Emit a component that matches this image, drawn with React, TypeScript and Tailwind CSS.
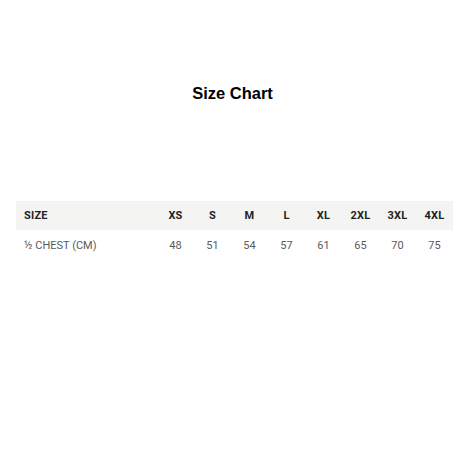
import React from 'react';

const sizes = ['XS', 'S', 'M', 'L', 'XL', '2XL', '3XL', '4XL'];
const chest = [48, 51, 54, 57, 61, 65, 70, 75];

const App: React.FC = () => {
    return (
        <div className="w-[465px] h-[465px] bg-white px-4">
            {/* Title */}
            <h1 className="pt-[82px] text-center text-[16.5px] leading-[22px] font-bold text-black font-['Liberation_Sans',Arial,sans-serif]">
                Size Chart
            </h1>

            {/* Table */}
            <table className="mt-[97px] w-[437px] table-fixed border-collapse font-['Roboto',sans-serif] text-[11px]">
                <colgroup>
                    <col className="w-[141px]" />
                    {sizes.map((s) => (
                        <col key={s} className="w-[37px]" />
                    ))}
                </colgroup>
                <thead>
                    <tr className="h-[29px] bg-[#f4f5f3]">
                        <th className="pl-2 pt-[2px] text-left font-bold text-[#1f1f1f] tracking-[0.2px]">SIZE</th>
                        {sizes.map((s) => (
                            <th key={s} className="pt-[2px] text-center font-bold text-[#1f1f1f] tracking-[0.2px]">{s}</th>
                        ))}
                    </tr>
                </thead>
                <tbody>
                    <tr className="h-[30px]">
                        <td className="pl-2 pt-[2px] text-left text-[#5a5a5a]">½ CHEST (CM)</td>
                        {chest.map((c) => (
                            <td key={c} className="pt-[2px] text-center text-[#5a5a5a]">{c}</td>
                        ))}
                    </tr>
                </tbody>
            </table>
        </div>
    );
};

export default App;
